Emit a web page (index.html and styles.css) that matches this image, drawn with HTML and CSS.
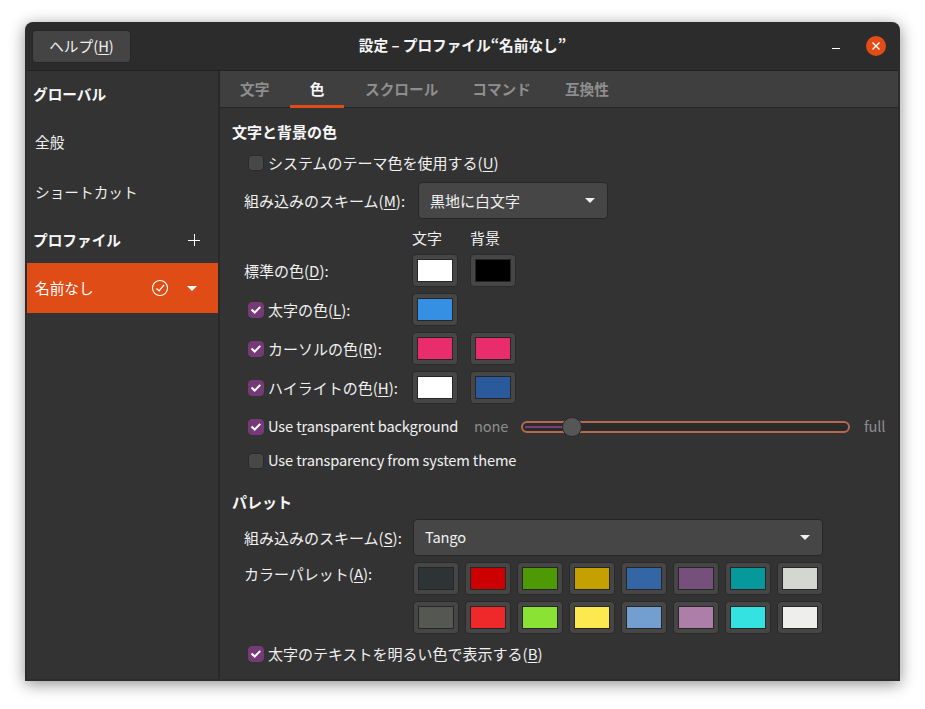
FILE: index.html
```html
<!DOCTYPE html>
<html lang="ja">
<head>
  <meta charset="UTF-8" />
  <title>設定</title>
  <link rel="stylesheet" href="styles.css">
</head>
<body>

<div class="window">
  <header class="titlebar">
    <div class="help-btn">ヘルプ(<u>H</u>)</div>
    <div class="title">設定 – プロファイル“名前なし”</div>
    <div class="win-controls">
      <svg class="min-icon" width="10" height="10" viewBox="0 0 10 10"><path d="M2 7.5h8" stroke="#fff" stroke-width="1"/></svg>
      <svg class="close-icon" width="20" height="20" viewBox="0 0 20 20"><circle cx="10" cy="10" r="10" fill="#e24d17"/><path d="M6.5 6.5l7 7M13.5 6.5l-7 7" stroke="#fff" stroke-width="1.4"/></svg>
    </div>
  </header>

  <div class="main">
    <aside class="sidebar">
      <div class="side-head">グローバル</div>
      <div class="side-item">全般</div>
      <div class="side-item">ショートカット</div>
      <div class="side-head">プロファイル
        <svg class="plus" width="12" height="12" viewBox="0 0 12 12"><path d="M6.5 0v12M0 6.5h12" stroke="#fff" stroke-width="1"/></svg>
      </div>
      <div class="side-item active">
        <span class="grow">名前なし</span>
        <svg class="default-icon" width="18" height="18" viewBox="0 0 18 18"><circle cx="9" cy="9" r="7.5" fill="none" stroke="#fff" stroke-width="1.1"/><path d="M5.5 9.5l2.6 2.4 5-6" fill="none" stroke="#fff" stroke-width="1.3"/></svg>
        <span class="arrow white"></span>
      </div>
    </aside>

    <section class="panel">
      <nav class="tabs">
        <a class="first">文字</a>
        <a class="on">色</a>
        <a>スクロール</a>
        <a class="tight">コマンド</a>
        <a class="tight">互換性</a>
      </nav>

      <div class="content">
        <h3 class="heading">文字と背景の色</h3>

        <label class="check-row gap8">
          <span class="check"></span>
          <span>システムのテーマ色を使用する(<u>U</u>)</span>
        </label>

        <div class="scheme-row gap8">
          <span class="scheme-label wide">組み込みのスキーム(<u>M</u>):</span>
          <div class="dropdown short">黒地に白文字<span class="arrow"></span></div>
        </div>

        <div class="color-row names">
          <span></span><span>文字</span><span>背景</span>
        </div>

        <div class="color-row first">
          <span>標準の色(<u>D</u>):</span>
          <div class="swatch"><i style="background:#ffffff"></i></div>
          <div class="swatch"><i style="background:#000000"></i></div>
        </div>
        <div class="color-row">
          <span class="with-check"><span class="check on"></span><span>太字の色(<u>L</u>):</span></span>
          <div class="swatch"><i style="background:#3590e3"></i></div>
        </div>
        <div class="color-row">
          <span class="with-check"><span class="check on"></span><span>カーソルの色(<u>R</u>):</span></span>
          <div class="swatch"><i style="background:#e92c6c"></i></div>
          <div class="swatch"><i style="background:#e92c6c"></i></div>
        </div>
        <div class="color-row">
          <span class="with-check"><span class="check on"></span><span>ハイライトの色(<u>H</u>):</span></span>
          <div class="swatch"><i style="background:#ffffff"></i></div>
          <div class="swatch"><i style="background:#2a5a9c"></i></div>
        </div>

        <div class="check-row gap12">
          <span class="check on"></span>
          <span class="tr-label latin">Use t<u>r</u>ansparent background</span>
          <span class="dim none latin">none</span>
          <div class="slider"><div class="fill"></div><div class="thumb"></div></div>
          <span class="dim full latin">full</span>
        </div>

        <label class="check-row gap12">
          <span class="check"></span>
          <span class="latin">Use transparency from system theme</span>
        </label>

        <h3 class="heading gap19">パレット</h3>

        <div class="scheme-row gap6">
          <span class="scheme-label">組み込みのスキーム(<u>S</u>):</span>
          <div class="dropdown long"><span class="latin">Tango</span><span class="arrow"></span></div>
        </div>

        <div class="palette-row">
          <span class="palette-label">カラーパレット(<u>A</u>):</span>
          <div class="palette">
            <div class="swatch"><i style="background:#2e3436"></i></div>
            <div class="swatch"><i style="background:#cc0000"></i></div>
            <div class="swatch"><i style="background:#4e9a06"></i></div>
            <div class="swatch"><i style="background:#c4a000"></i></div>
            <div class="swatch"><i style="background:#3465a4"></i></div>
            <div class="swatch"><i style="background:#75507b"></i></div>
            <div class="swatch"><i style="background:#06989a"></i></div>
            <div class="swatch"><i style="background:#d3d7cf"></i></div>
            <div class="swatch"><i style="background:#555753"></i></div>
            <div class="swatch"><i style="background:#ef2929"></i></div>
            <div class="swatch"><i style="background:#8ae234"></i></div>
            <div class="swatch"><i style="background:#fce94f"></i></div>
            <div class="swatch"><i style="background:#729fcf"></i></div>
            <div class="swatch"><i style="background:#ad7fa8"></i></div>
            <div class="swatch"><i style="background:#34e2e2"></i></div>
            <div class="swatch"><i style="background:#eeeeec"></i></div>
          </div>
        </div>

        <label class="check-row gap9">
          <span class="check on"></span>
          <span>太字のテキストを明るい色で表示する(<u>B</u>)</span>
        </label>
      </div>
    </section>
  </div>
</div>

</body>
</html>
```

FILE: styles.css
```css
* {
  box-sizing: border-box;
}
html, body {
  height: 100%;
}
body {
  margin: 0;
  padding: 22px 25px 28px;
  background: #fff;
  color: #f0f0f0;
  font-family: "Noto Sans CJK JP", "Noto Sans", sans-serif;
  font-size: 14.67px;
  line-height: 22px;
  overflow: hidden;
}
u {
  text-underline-offset: 2px;
  text-decoration-thickness: 1px;
}

/* ventana */
.window {
  width: 875px;
  height: 659px;
  display: flex;
  flex-direction: column;
  background: #2c2c2c;
  border-radius: 8px 8px 0 0;
  padding: 0 2px 2px;
  box-shadow: 0 3px 16px rgba(0, 0, 0, 0.45);
}
.titlebar {
  height: 48px;
  flex: none;
  display: flex;
  align-items: center;
  padding-left: 5px;
  position: relative;
}
.help-btn {
  width: 99px;
  height: 33px;
  background: #444;
  border: 1px solid #262626;
  border-radius: 4px;
  text-align: center;
  line-height: 29px;
}
.title {
  position: absolute;
  left: 0;
  right: 0;
  padding-bottom: 2px;
  text-align: center;
  font-weight: 700;
  color: #f4f4f4;
}
.win-controls {
  margin-left: auto;
  display: flex;
  align-items: center;
  gap: 26px;
  padding-right: 12px;
}

.main {
  flex: 1;
  display: flex;
  min-height: 0;
  border-top: 1px solid #222;
}

/* barra lateral */
.sidebar {
  width: 193px;
  flex: none;
  background: #333;
  border-right: 2px solid #292929;
}
.side-head {
  height: 46px;
  display: flex;
  align-items: center;
  justify-content: space-between;
  padding: 0 18px 0 6px;
  font-weight: 700;
  color: #f7f7f7;
}
.side-item {
  height: 50px;
  display: flex;
  align-items: center;
  padding: 0 8px;
}
.side-item.active {
  background: #e04c16;
  color: #fff;
  padding-right: 21px;
}
.grow {
  flex: 1;
}
.default-icon {
  margin-right: 18px;
}
.arrow {
  display: block;
  width: 0;
  height: 0;
  border-left: 5px solid transparent;
  border-right: 5px solid transparent;
  border-top: 5px solid #f0f0f0;
}
.arrow.white {
  border-top-color: #fff;
}

/* pestañas */
.panel {
  flex: 1;
  min-width: 0;
  display: flex;
  flex-direction: column;
  background: #333;
}
.tabs {
  height: 37px;
  flex: none;
  display: flex;
  background: #3f3f3f;
  border-bottom: 1px solid #262626;
}
.tabs a {
  padding: 0 20px;
  line-height: 35px;
  font-weight: 700;
  color: #8e8e8e;
  border-bottom: 3px solid transparent;
  height: 37px;
}
.tabs a.first {
  width: 70px;
  flex: none;
}
.tabs a.on {
  width: 54px;
  padding: 0;
  text-align: center;
  margin-right: 1px;
  color: #f7f7f7;
  border-bottom-color: #e04c16;
}
.tabs a.tight {
  margin-left: -6px;
}

/* contenido */
.content {
  padding: 13px 12px 0;
  font-size: 15px;
}
.latin {
  font-size: 14.67px;
  letter-spacing: -0.15px;
  padding-bottom: 2px;
}
.heading {
  margin: 0;
  font-size: inherit;
  font-weight: 700;
  color: #f7f7f7;
}
.gap6 { margin-top: 6px; }
.gap8 { margin-top: 8px; }
.gap9 { margin-top: 9px; }
.gap12 { margin-top: 12px; }
.gap19 { margin-top: 19px; }

.heading + .check-row {
  margin-top: 9px;
}
.check-row {
  display: flex;
  align-items: center;
  height: 22px;
  padding-left: 16px;
  gap: 4px;
}
.check {
  display: inline-block;
  flex: none;
  width: 16px;
  height: 16px;
  background: #484848 center no-repeat;
  border: 1px solid #2a2a2a;
  border-radius: 4px;
}
.check.on {
  background-color: #763a76;
  border-color: #763a76;
  background-image: url("data:image/svg+xml,%3Csvg xmlns='http://www.w3.org/2000/svg' width='14' height='14' viewBox='0 0 14 14'%3E%3Cpath d='M2.5 6.5l3.2 3 5.6-5.6' fill='none' stroke='%23fff' stroke-width='2'/%3E%3C/svg%3E");
}

.scheme-row {
  display: flex;
  align-items: center;
  padding-left: 12px;
}
.scheme-label {
  width: 169px;
  flex: none;
}
.scheme-label.wide {
  width: 174px;
}
.dropdown {
  height: 37px;
  display: flex;
  align-items: center;
  justify-content: space-between;
  background: #464646;
  border: 1px solid #262626;
  border-radius: 4px;
  padding: 0 12px 0 11px;
}
.dropdown.short {
  width: 190px;
}
.dropdown.long {
  width: 410px;
}

.color-row {
  display: grid;
  grid-template-columns: 156px 46px 46px;
  column-gap: 12px;
  align-items: center;
  padding-left: 12px;
  margin-top: 6px;
}
.color-row.names {
  margin-top: 9px;
  height: 20px;
  line-height: 20px;
}
.with-check {
  display: flex;
  align-items: center;
  gap: 4px;
  margin-left: 4px;
  white-space: nowrap;
}

.swatch {
  width: 46px;
  height: 33px;
  padding: 4px;
  background: #464646;
  border: 1px solid #2a2a2a;
  border-radius: 4px;
}
.swatch i {
  display: block;
  height: 100%;
  border: 1px solid #262626;
}

/* deslizador */
.tr-label {
  width: 202px;
  flex: none;
  white-space: nowrap;
}
.dim {
  color: #8e8e8e;
  flex: none;
}
.none {
  width: 33px;
}
.slider {
  width: 329px;
  height: 12px;
  flex: none;
  position: relative;
  margin-left: 10px;
  border: 2px solid #b5694f;
  border-radius: 6px;
  background: #2b2b2b;
}
.fill {
  width: 40px;
  height: 2px;
  margin: 3px 0 0 2px;
  background: #7a3f78;
}
.thumb {
  position: absolute;
  left: 39px;
  top: -6px;
  width: 20px;
  height: 20px;
  border-radius: 50%;
  background: #565656;
  border: 1px solid #2a2a2a;
}
.full {
  margin-left: 10px;
}

/* paleta */
.palette-row {
  display: flex;
  align-items: flex-start;
  padding-left: 12px;
  margin-top: 6px;
}
.palette-label {
  width: 169px;
  flex: none;
  padding-top: 1px;
}
.palette {
  display: grid;
  grid-template-columns: repeat(8, 46px);
  column-gap: 6px;
  row-gap: 6px;
}
```
